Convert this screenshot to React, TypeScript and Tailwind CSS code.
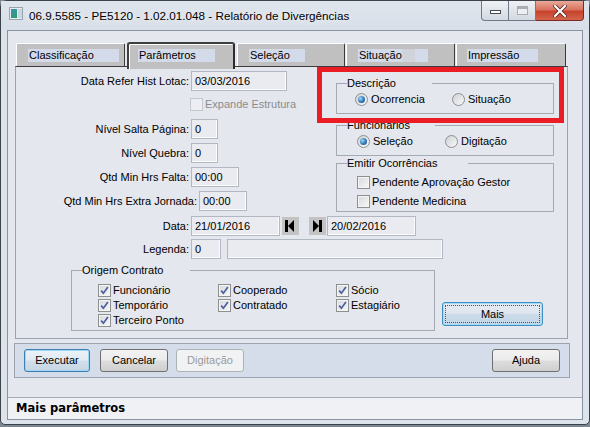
import React from 'react'

function Check({ checked, disabled }: { checked?: boolean; disabled?: boolean }) {
  return (
    <span
      className={
        disabled
          ? 'flex h-[13px] w-[13px] shrink-0 items-center justify-center border border-[#c3c7ce] bg-[#eceef3]'
          : 'flex h-[13px] w-[13px] shrink-0 items-center justify-center border border-[#8e8f8f] bg-[linear-gradient(135deg,#d6d8dc,#f7f8f9)] shadow-[inset_0_0_0_1px_#f4f4f4]'
      }
    >
      {checked && (
        <svg width="9" height="9" viewBox="0 0 9 9">
          <path d="M1.2 4.6 L3.4 7.2 L7.9 1" stroke="#4a5f9e" strokeWidth="1.7" fill="none" />
        </svg>
      )}
    </span>
  )
}

function Radio({ on }: { on?: boolean }) {
  return (
    <span className="flex h-[13px] w-[13px] shrink-0 items-center justify-center rounded-full border border-[#8e8f8f] bg-[linear-gradient(135deg,#cfd1d4,#f8f9fa)]">
      {on && (
        <span className="h-[7px] w-[7px] rounded-full bg-[radial-gradient(circle_at_35%_35%,#9ad8f7,#2a6fb0_60%,#1b4f85)]" />
      )}
    </span>
  )
}

function Field({ className, value }: { className: string; value?: string }) {
  return (
    <div
      className={`flex h-[20px] items-center border border-[#b2b7c1] bg-[#e9ebf1] pl-[3px] shadow-[inset_-1px_-1px_0_#fbfcfd] ${className}`}
    >
      {value}
    </div>
  )
}

function WinButton({
  children,
  className,
  focused,
  disabled,
}: {
  children: React.ReactNode
  className: string
  focused?: boolean
  disabled?: boolean
}) {
  let look =
    'border-[#707070] bg-[linear-gradient(#f3f3f3_0%,#ebebeb_48%,#dddddd_52%,#cfcfcf_100%)] text-black'
  if (focused)
    look =
      'border-[#3c7fb1] bg-[linear-gradient(#eaf2f8_0%,#e2ebf2_48%,#d2dfea_52%,#c6d6e4_100%)] shadow-[inset_0_0_0_1px_#9fd6f3] text-black'
  if (disabled) look = 'border-[#adb2b5] bg-[#f1f2f4] text-[#9a9a9a]'
  return (
    <div
      className={`flex h-[23px] items-center justify-center rounded-[3px] border ${look} ${className}`}
    >
      {children}
    </div>
  )
}

function TitleBar() {
  return (
    <div className="flex h-[29px] shrink-0 items-start bg-[linear-gradient(#dfe5ed,#d9dfe8)]">
      <div className="ml-[8px] mt-[6px] flex h-[13px] w-[14px] items-center border border-[#9aa1aa] bg-[#e8ecf0] pl-[1px]">
        <div className="h-[9px] w-[6px] bg-[linear-gradient(135deg,#3a8fb0,#2e9e6a)]" />
        <div className="ml-[1px] h-[9px] w-[4px] bg-[#c9d8e0]" />
      </div>
      <div className="ml-[6px] mt-[7px] text-[11.7px] leading-[15px] text-black [text-shadow:0_0_6px_#ffffff]">
        06.9.5585 - PE5120 - 1.02.01.048 - Relatório de Divergências
      </div>
      <div className="ml-auto mr-[5px] flex">
        <div className="flex h-[20px] w-[28px] items-center justify-center rounded-bl-[4px] border border-t-0 border-[#707a86] bg-[linear-gradient(#eef1f5,#d3d9e1)]">
          <div className="mt-[3px] h-[4px] w-[11px] border border-[#434a52] bg-white" />
        </div>
        <div className="flex h-[20px] w-[27px] items-center justify-center border border-l-0 border-t-0 border-[#707a86] bg-[linear-gradient(#eef1f5,#d3d9e1)]">
          <div className="h-[9px] w-[11px] border border-[#a7adb5] bg-[#eef0f3] shadow-[inset_0_2px_0_#a7adb5]" />
        </div>
        <div className="flex h-[20px] w-[48px] items-center justify-center rounded-br-[4px] border border-l-0 border-t-0 border-[#7a2a22] bg-[linear-gradient(#e9a99a_0%,#d9735f_45%,#c8412b_55%,#d2664d_100%)]">
          <svg width="14" height="12" viewBox="0 0 14 12">
            <path d="M2 1 L12 11 M12 1 L2 11" stroke="#4a1c16" strokeWidth="3.6" strokeLinecap="square" />
            <path d="M2 1 L12 11 M12 1 L2 11" stroke="#ffffff" strokeWidth="2.2" strokeLinecap="square" />
          </svg>
        </div>
      </div>
    </div>
  )
}

function Tabs() {
  return (
    <div className="ml-[8px] mt-[11px] flex h-[24px] shrink-0 items-start">
      <div className="mt-[1px] h-[23px] w-[109px] rounded-tr-[2px] border-l border-r border-t border-l-white border-r-[#3a3a3a] border-t-white bg-[#c0c0c0] pt-[5px]">
        <div className="ml-[11px] h-[13px] w-[91px] bg-[#d3dbea] pl-[1px] leading-[13px]">Classificação</div>
      </div>
      <div className="relative z-10 ml-[2px] h-[27px] w-[108px] rounded-t-[3px] border-l-2 border-r-2 border-t-2 border-l-[#3f3f3f] border-r-[#2c2c2c] border-t-[#3f3f3f] bg-[#c0c0c0] pt-[5px] shadow-[inset_1px_1px_0_#ffffff]">
        <div className="ml-[9px] h-[13px] w-[77px] bg-[#d3dbea] pl-[1px] leading-[13px]">Parâmetros</div>
      </div>
      <div className="ml-[2px] mt-[1px] h-[23px] w-[108px] rounded-tr-[2px] border-l border-r border-t border-l-white border-r-[#3a3a3a] border-t-white bg-[#c0c0c0] pt-[5px]">
        <div className="ml-[11px] h-[13px] w-[56px] bg-[#d3dbea] pl-[1px] leading-[13px]">Seleção</div>
      </div>
      <div className="ml-[1px] mt-[1px] h-[23px] w-[109px] rounded-tr-[2px] border-l border-r border-t border-l-white border-r-[#3a3a3a] border-t-white bg-[#c0c0c0] pt-[5px]">
        <div className="ml-[11px] flex h-[13px] w-[70px] bg-[#d3dbea] leading-[13px]">
          <span className="w-[44px] pl-[1px]">Situação</span>
          <span className="w-[13px] bg-[#d0d3d9]" />
        </div>
      </div>
      <div className="ml-[1px] mt-[1px] h-[23px] w-[110px] rounded-tr-[2px] border-l border-r border-t border-l-white border-r-[#3a3a3a] border-t-white bg-[#c0c0c0] pt-[5px]">
        <div className="ml-[10px] h-[13px] w-[71px] bg-[#d3dbea] pl-[1px] leading-[13px]">Impressão</div>
      </div>
    </div>
  )
}

function NavFirst() {
  return (
    <div className="ml-[2px] h-[18px] w-[17px] bg-[#c3c3c3]">
      <svg width="17" height="18" viewBox="0 0 17 18">
        <rect x="3" y="3" width="3" height="12" fill="#000" />
        <polygon points="12,3 6,9 12,15" fill="#000" />
      </svg>
    </div>
  )
}

function NavLast() {
  return (
    <div className="ml-[10px] h-[18px] w-[17px] bg-[#c3c3c3]">
      <svg width="17" height="18" viewBox="0 0 17 18">
        <polygon points="4,3 10,9 4,15" fill="#000" />
        <rect x="10" y="3" width="3" height="12" fill="#000" />
      </svg>
    </div>
  )
}

function Panel() {
  return (
    <div className="relative ml-[7px] h-[273px] w-[553px] shrink-0 border border-[#9aa2b0] border-t-[#3c3c3c]">
      <div className="flex">
        <div className="w-[320px]">
          <div className="mt-[4px] flex items-center">
            <span className="w-[173px] text-right">Data Refer Hist Lotac:</span>
            <Field className="ml-[2px] w-[96px]" value="03/03/2016" />
          </div>
          <div className="mt-[7px] flex h-[13px] items-center pl-[174px] text-[#8c8c8c]">
            <Check disabled />
            <span className="ml-[2px]">Expande Estrutura</span>
          </div>
          <div className="mt-[8px] flex items-center">
            <span className="w-[173px] text-right">Nível Salta Página:</span>
            <Field className="ml-[2px] w-[27px]" value="0" />
          </div>
          <div className="mt-[4px] flex items-center">
            <span className="w-[173px] text-right">Nível Quebra:</span>
            <Field className="ml-[2px] w-[27px]" value="0" />
          </div>
          <div className="mt-[4px] flex items-center">
            <span className="w-[173px] text-right">Qtd Min Hrs Falta:</span>
            <Field className="ml-[2px] w-[48px]" value="00:00" />
          </div>
          <div className="mt-[4px] flex items-center">
            <span className="w-[181px] text-right">Qtd Min Hrs Extra Jornada:</span>
            <Field className="ml-[2px] w-[48px]" value="00:00" />
          </div>
        </div>

        <div className="w-[218px]">
          <fieldset className="mt-[10px] h-[37px] min-w-0 border border-[#a4a9b3] px-[10px]">
            <legend className="w-[85px] leading-[12px]">Descrição</legend>
            <div className="mt-[4px] flex items-center">
              <div className="ml-[8px] flex w-[97px] items-center">
                <Radio on />
                <span className="ml-[3px]">Ocorrencia</span>
              </div>
              <div className="flex items-center">
                <Radio />
                <span className="ml-[3px]">Situação</span>
              </div>
            </div>
          </fieldset>
          <fieldset className="mt-[5px] h-[37px] min-w-0 border border-[#a4a9b3] px-[10px]">
            <legend className="w-[88px] leading-[12px]">Funcionarios</legend>
            <div className="mt-[4px] flex items-center">
              <div className="ml-[10px] flex w-[88px] items-center">
                <Radio on />
                <span className="ml-[3px]">Seleção</span>
              </div>
              <div className="flex items-center">
                <Radio />
                <span className="ml-[3px]">Digitação</span>
              </div>
            </div>
          </fieldset>
          <fieldset className="mt-[1px] h-[55px] min-w-0 border border-[#a4a9b3] px-[10px]">
            <legend className="w-[121px] leading-[12px]">Emitir Ocorrências</legend>
            <div className="ml-[10px] mt-[7px] flex h-[13px] items-center">
              <Check />
              <span className="ml-[2px]">Pendente Aprovação Gestor</span>
            </div>
            <div className="ml-[10px] mt-[6px] flex h-[13px] items-center">
              <Check />
              <span className="ml-[2px]">Pendente Medicina</span>
            </div>
          </fieldset>
        </div>
      </div>

      <div className="mt-[4px] flex items-center">
        <span className="w-[173px] text-right">Data:</span>
        <Field className="ml-[2px] w-[89px]" value="21/01/2016" />
        <NavFirst />
        <NavLast />
        <Field className="ml-[1px] w-[89px]" value="20/02/2016" />
      </div>
      <div className="mt-[3px] flex items-center">
        <span className="w-[173px] text-right">Legenda:</span>
        <Field className="ml-[2px] w-[30px]" value="0" />
        <Field className="ml-[6px] w-[216px]" />
      </div>

      <div className="flex items-start">
        <fieldset className="ml-[55px] mt-[5px] h-[67px] w-[364px] min-w-0 border border-[#a4a9b3] px-[10px]">
          <legend className="w-[108px] leading-[12px]">Origem Contrato</legend>
          <div className="ml-[16px] mt-[8px] flex">
            <div className="w-[120px]">
              <div className="flex h-[15px] items-start">
                <Check checked />
                <span className="ml-[2px]">Funcionário</span>
              </div>
              <div className="flex h-[15px] items-start">
                <Check checked />
                <span className="ml-[2px]">Temporário</span>
              </div>
              <div className="flex h-[15px] items-start">
                <Check checked />
                <span className="ml-[2px]">Terceiro Ponto</span>
              </div>
            </div>
            <div className="w-[118px]">
              <div className="flex h-[15px] items-start">
                <Check checked />
                <span className="ml-[2px]">Cooperado</span>
              </div>
              <div className="flex h-[15px] items-start">
                <Check checked />
                <span className="ml-[2px]">Contratado</span>
              </div>
            </div>
            <div>
              <div className="flex h-[15px] items-start">
                <Check checked />
                <span className="ml-[2px]">Sócio</span>
              </div>
              <div className="flex h-[15px] items-start">
                <Check checked />
                <span className="ml-[2px]">Estagiário</span>
              </div>
            </div>
          </div>
        </fieldset>
        <div className="ml-[7px] mt-[43px] flex h-[24px] w-[101px] items-center justify-center rounded-[3px] border border-[#3c8fc4] bg-[linear-gradient(#e6ecf3_0%,#dde5ee_48%,#ccdbe9_52%,#c2d6e8_100%)] shadow-[inset_0_0_0_1px_#a5dcf6]">
          <div className="flex h-[18px] w-[95px] items-center justify-center border border-dotted border-[#555]">
            Mais
          </div>
        </div>
      </div>

      <div className="absolute left-[301px] top-0 h-[56px] w-[247px] border-[5px] border-[#ec1c24]" />
    </div>
  )
}

export default function App() {
  return (
    <div className="h-[427px] w-[590px] overflow-hidden bg-[#7d8791] font-['Liberation_Sans',Arial,sans-serif] text-[11px] leading-[13px] text-black">
      <div className="flex h-[425px] w-[590px] flex-col rounded-b-[5px] rounded-t-[7px] border border-[#3d4148] bg-[#dde3eb]">
        <TitleBar />
        <div className="mx-[6px] flex h-[390px] flex-col border border-[#8b93a0] bg-[#e4e7ee]">
          <Tabs />
          <Panel />
          <div className="ml-[6px] mt-[4px] flex h-[35px] w-[556px] shrink-0 items-center border border-[#9ba3b1] bg-[#d5dcea] px-[9px]">
            <WinButton className="w-[66px]" focused>Executar</WinButton>
            <WinButton className="ml-[10px] w-[68px]">Cancelar</WinButton>
            <WinButton className="ml-[8px] w-[68px]" disabled>Digitação</WinButton>
            <WinButton className="ml-auto w-[68px]">Ajuda</WinButton>
          </div>
          <div className="mt-auto flex h-[22px] items-center border-t border-[#a3abb8] bg-[#eff1f5] pl-[8px] font-['DejaVu_Sans',sans-serif] text-[11.5px] font-bold">
            Mais parâmetros
          </div>
        </div>
      </div>
    </div>
  )
}
